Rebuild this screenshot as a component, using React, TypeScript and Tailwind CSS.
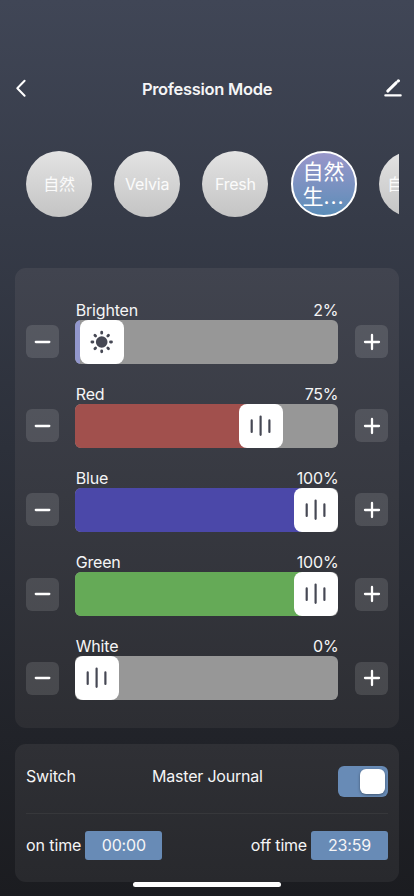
import type { ReactNode } from "react";

const CJK = "font-['Inter','Noto_Sans_CJK_SC',sans-serif]";

function BarsIcon() {
  return (
    <svg width="22" height="22" viewBox="0 0 22 22" fill="none" stroke="#464854" strokeWidth="2.2" strokeLinecap="round">
      <path d="M1.7 5.4v11.6M10.6 1.6v18.2M19.4 5.4v11.6" />
    </svg>
  );
}

function SunIcon() {
  return (
    <svg width="24" height="24" viewBox="0 0 24 24" fill="none" stroke="#464854" strokeWidth="2.8" strokeLinecap="round">
      <circle cx="11.7" cy="12" r="5.8" fill="#464854" stroke="none" />
      <path d="M11.7 2.2v1M11.7 20.8v1M1.9 12h1M20.5 12h1M4.9 5.2l.7.7M17.8 18.1l.7.7M4.9 18.8l.7-.7M17.8 5.9l.7-.7" />
    </svg>
  );
}

function StepButton({ plus = false }: { plus?: boolean }) {
  return (
    <button className="mb-[5.5px] flex h-[33px] w-[33px] shrink-0 items-center justify-center rounded-md bg-white/12">
      <svg width="18" height="18" viewBox="0 0 18 18" fill="none" stroke="#fff" strokeWidth="2.3" strokeLinecap="round">
        <path d={plus ? "M2 9h14M9 2v14" : "M1.8 9h13.5"} />
      </svg>
    </button>
  );
}

type Channel = { name: string; value: string; fill: string; offset: number; icon: ReactNode };

const channels: Channel[] = [
  { name: "Brighten", value: "2%", fill: "bg-[#9297cd]", offset: 4.7, icon: <SunIcon /> },
  { name: "Red", value: "75%", fill: "bg-[#a1504d]", offset: 163.3, icon: <BarsIcon /> },
  { name: "Blue", value: "100%", fill: "bg-[#4b48a9]", offset: 218.5, icon: <BarsIcon /> },
  { name: "Green", value: "100%", fill: "bg-[#65aa57]", offset: 218.5, icon: <BarsIcon /> },
  { name: "White", value: "0%", fill: "bg-white", offset: 0, icon: <BarsIcon /> },
];

function ChannelRow({ name, value, fill, offset, icon }: Channel) {
  return (
    <div className="flex h-[84.2px] items-end">
      <StepButton />
      <div className="mr-[17px] ml-[16.4px] flex-1">
        <div className="flex h-5 items-center justify-between text-[16px] leading-5 tracking-[-0.2px]">
          <span className="pl-[0.4px]">{name}</span>
          <span className="-mr-[0.4px]">{value}</span>
        </div>
        <div className="flex h-11 overflow-hidden rounded-md bg-[#979797]">
          <div className={`h-full shrink-0 ${fill}`} style={{ width: offset }} />
          <div className="h-full w-11 shrink-0">
            <div className={`h-full w-5 ${offset > 10 ? fill : ""}`}>
              <div className="flex h-full w-11 items-center justify-center rounded-[8px] bg-white">{icon}</div>
            </div>
          </div>
        </div>
      </div>
      <StepButton plus />
    </div>
  );
}

function Mode({ label, overflow = false }: { label: string; overflow?: boolean }) {
  return (
    <button
      className={`flex h-[66px] w-[66px] shrink-0 items-center rounded-full bg-linear-to-b from-[#e3e3e3] to-[#c4c4c4] text-[16px] tracking-[-0.2px] text-white/90 ${overflow ? "justify-start pl-[8.5px]" : "justify-center"}`}
    >
      {label}
    </button>
  );
}

export default function App() {
  return (
    <div className={`flex h-[896px] w-[414px] flex-col overflow-hidden bg-linear-to-b from-[#404656] via-[#2c303a] to-[#1b1c20] text-[#f5f5f6] ${CJK}`}>
      <header className="mt-[69px] flex h-10 items-center justify-between pr-3 pl-[15px]">
        <svg width="18" height="20" viewBox="0 0 18 20" fill="none" stroke="#fff" strokeWidth="2" strokeLinecap="round" strokeLinejoin="round">
          <path d="M9.6 1.7 2.3 9.2l7.3 7.6" />
        </svg>
        <h1 className="pr-[3px] text-[16.5px] leading-5 font-semibold tracking-[-0.3px]">Profession Mode</h1>
        <svg width="18" height="20" viewBox="0 0 18 20" fill="none" stroke="#fff" strokeLinecap="round">
          <path d="m3.7 12.1 8.6-8.5" strokeWidth="2.9" />
          <path d="m14.3 1.9.1-.1" strokeWidth="3.1" />
          <path d="M1.3 16.4h15.4" strokeWidth="2.1" />
        </svg>
      </header>

      <nav className="mt-[42px] mr-[15px] ml-[26px] flex gap-[22.2px] overflow-hidden">
        <Mode label="自然" />
        <Mode label="Velvia" />
        <Mode label="Fresh" />
        <button className="flex h-[66px] w-[66px] shrink-0 flex-col items-center justify-center rounded-full border-2 border-white bg-linear-to-b from-[#9896ca] to-[#5b8db8] text-[21px] leading-[25px] text-white">
          <span>自然</span>
          <span>生<span className="tracking-[1px]">...</span></span>
        </button>
        <Mode label="自然" overflow />
      </nav>

      <section className="mx-[15px] mt-[51px] h-[459.5px] rounded-[11px] bg-linear-to-b from-[#41444f] to-[#2d2e33] px-[11px] pt-[11.4px]">
        {channels.map((c) => (
          <ChannelRow key={c.name} {...c} />
        ))}
      </section>

      <section className="mx-[15px] mt-[16.3px] h-[138px] rounded-[11px] bg-linear-to-b from-[#2f3035] to-[#28292d] px-[11px] text-[16px] leading-5">
        <div className="flex h-[70px] justify-between border-b border-white/5 pt-[22px]">
          <span className="w-[126px] tracking-[-0.2px]">Switch</span>
          <span className="flex-1 tracking-[-0.2px]">Master Journal</span>
          <button className="flex h-[31px] w-[50px] items-center justify-end rounded-[6px] bg-[#688bb6] pr-[3px]">
            <span className="h-[25px] w-[25px] rounded-[6px] bg-white shadow-[0_1px_3px_rgba(0,0,0,0.4)]" />
          </button>
        </div>
        <div className="flex items-center justify-between pt-[17.3px]">
          <div className="flex items-center gap-1">
            <span className="tracking-[-0.1px]">on time</span>
            <span className="flex h-[28.5px] w-[77px] items-center justify-center rounded-[3px] bg-[#688bb6] tracking-[-0.2px]">00:00</span>
          </div>
          <div className="flex items-center gap-1">
            <span className="tracking-[-0.2px]">off time</span>
            <span className="flex h-[28.5px] w-[77px] items-center justify-center rounded-[3px] bg-[#688bb6] tracking-[-0.2px]">23:59</span>
          </div>
        </div>
      </section>

      <div className="mx-auto mt-[0.5px] h-[5px] w-[148px] shrink-0 rounded-full bg-white" />
    </div>
  );
}
